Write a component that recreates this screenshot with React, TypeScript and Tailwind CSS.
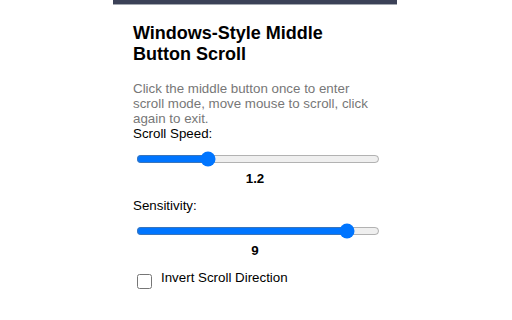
import { useState } from "react";

export default function App() {
  const [speed, setSpeed] = useState(1.2);
  const [sensitivity, setSensitivity] = useState(9);
  const [invert, setInvert] = useState(false);

  return (
    <div className="min-h-screen bg-white flex justify-center pr-[2px] font-['Liberation_Sans',Arial,sans-serif] text-black text-[13.33px] leading-[normal]">
      <div className="w-[284px]">
        <div className="h-[5px] bg-[#3b4157] border-b border-[#a3a8b0]" />
        <div className="px-5 pt-[18px]">
          <h1 className="mb-4 text-[18px] font-bold leading-[normal]">
            Windows-Style Middle Button Scroll
          </h1>
          <p className="text-[#777]">
            Click the middle button once to enter scroll mode, move mouse to
            scroll, click again to exit.
          </p>

          <div className="mb-[12px]">
            <label className="block">Scroll Speed:</label>
            <input
              type="range"
              min={0.5}
              max={3}
              step={0.1}
              value={speed}
              onChange={(e) => setSpeed(parseFloat(e.target.value))}
              className="block w-[244px] mt-[10px] ml-[3px] accent-[#0075ff]"
            />
            <div className="mt-[4px] text-center font-bold">
              {speed.toFixed(1)}
            </div>
          </div>

          <div className="mb-[12px]">
            <label className="block">Sensitivity:</label>
            <input
              type="range"
              min={1}
              max={10}
              step={1}
              value={sensitivity}
              onChange={(e) => setSensitivity(parseInt(e.target.value))}
              className="block w-[244px] mt-[10px] ml-[3px] accent-[#0075ff]"
            />
            <div className="mt-[4px] text-center font-bold">{sensitivity}</div>
          </div>

          <label className="flex items-start">
            <input
              type="checkbox"
              checked={invert}
              onChange={(e) => setInvert(e.target.checked)}
              className="w-[15px] h-[15px] mt-[4px] ml-[4px] mr-[9px]"
            />
            Invert Scroll Direction
          </label>
        </div>
      </div>
    </div>
  );
}
